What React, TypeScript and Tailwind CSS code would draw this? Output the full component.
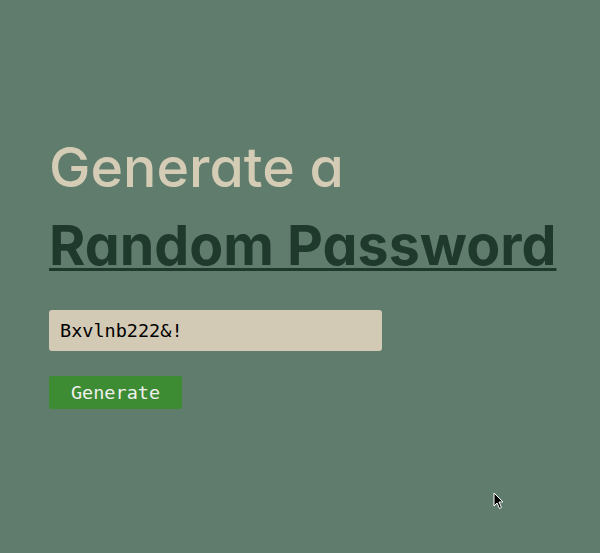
export default function App() {
  return (
    <div className="relative w-[600px] h-[553px] bg-[#5f7c6d] overflow-hidden">
      <div className="flex flex-col items-start pl-[49px] pt-[128px] font-[Inter,'Noto_Sans',sans-serif] [font-feature-settings:'cv11']">
        <h1 className="text-[55.5px] leading-[78px] font-medium text-[#d5ccb5]">
          Generate a
        </h1>
        <h2 className="text-[55.5px] leading-[78px] font-bold text-[#1f3a2d] underline decoration-[3px] underline-offset-[3px]">
          Random Password
        </h2>
        <div className="mt-[26px] w-[333px] h-[41px] rounded-[3px] bg-[#d3cab5] flex items-center pl-[11px] text-[18.5px] text-black font-['DejaVu_Sans_Mono',monospace]">
          Bxvlnb222&amp;!
        </div>
        <button className="mt-[25px] w-[133px] h-[33px] rounded-[2px] bg-[#3d8c33] text-[#f0f0f0] text-[18.5px] flex items-center justify-center font-['DejaVu_Sans_Mono',monospace]">
          Generate
        </button>
      </div>
      <svg className="absolute left-[493px] top-[492px]" width="12" height="18" viewBox="0 0 12 18">
        <path d="M1 1 L1 14 L4 11 L6.5 16.5 L8.5 15.5 L6 10 L10 10 Z" fill="black" stroke="white" strokeWidth="1" />
      </svg>
    </div>
  );
}
